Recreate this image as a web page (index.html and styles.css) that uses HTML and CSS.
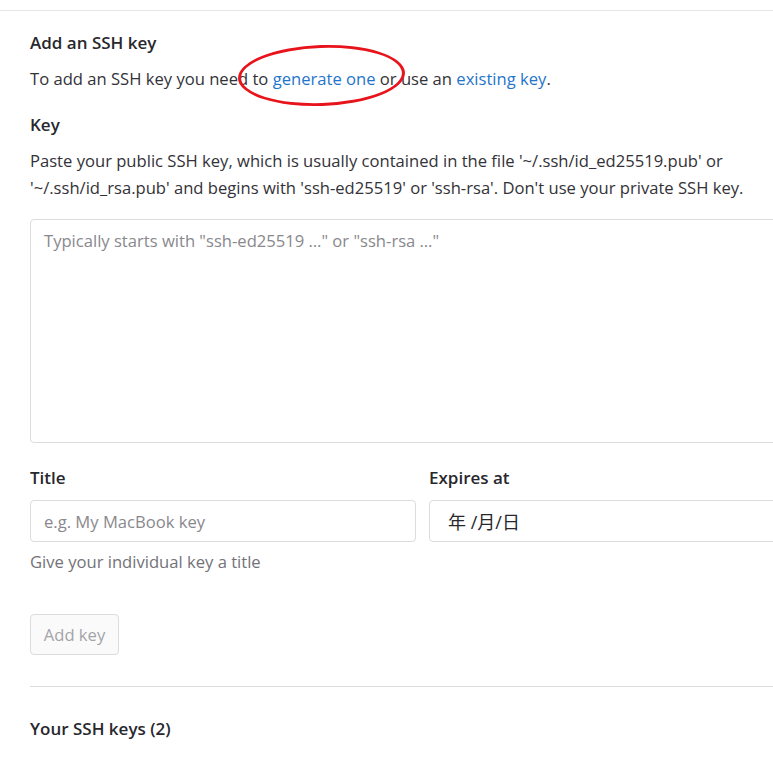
FILE: index.html
```html
<!DOCTYPE html>
<html>
<head>
<meta charset="utf-8">
<link rel="stylesheet" href="styles.css">
</head>
<body>
<div class="page">
  <div class="section">
    <h4 class="heading">Add an SSH key</h4>
    <p class="intro">To add an SSH key you need to <a href="#">generate one</a> or use an <a href="#">existing key</a>.</p>
    <div class="annot"></div>
    <label class="label">Key</label>
    <p class="desc">Paste your public SSH key, which is usually contained in the file '~/.ssh/id_ed25519.pub' or '~/.ssh/id_rsa.pub' and begins with 'ssh-ed25519' or 'ssh-rsa'. Don't use your private SSH key.</p>
    <div class="textarea"><span class="ph">Typically starts with "ssh-ed25519 …" or "ssh-rsa …"</span></div>
    <div class="row">
      <div class="col">
        <label class="label">Title</label>
        <div class="input"><span class="ph">e.g. My MacBook key</span></div>
        <div class="help">Give your individual key a title</div>
      </div>
      <div class="col">
        <label class="label">Expires at</label>
        <div class="input date">年 /月/日</div>
      </div>
    </div>
    <button class="btn">Add key</button>
    <div class="divider"></div>
    <h4 class="heading keys">Your SSH keys (2)</h4>
  </div>
</div>
</body>
</html>
```

FILE: styles.css
```css
html, body {
  margin: 0;
  padding: 0;
  overflow: hidden;
  background: #fff;
}
body {
  font-family: "Open Sans", "Noto Sans CJK SC", sans-serif;
  font-size: 16.6px;
  color: #333238;
}
.page {
  padding-top: 10px;
}
.section {
  border-top: 1px solid #e6e6e6;
  padding: 20px 30px 0 30px;
  width: 785px;
  position: relative;
}
.heading {
  margin: 0;
  font-size: 17px;
  font-weight: 600;
  line-height: 24px;
  color: #28272d;
}
.intro {
  margin: 12px 0 0 0;
  line-height: 24px;
}
.intro a {
  color: #1f75cb;
  text-decoration: none;
}
.annot {
  position: absolute;
  left: 238px;
  top: 34px;
  width: 161px;
  height: 55px;
  border: 3.5px solid #e8141b;
  border-radius: 50%;
  transform: rotate(-2deg);
}
.label {
  display: block;
  font-weight: 600;
  font-size: 17px;
  line-height: 24px;
  margin-top: 22px;
  color: #28272d;
}
.desc {
  margin: 10px 0 0 0;
  line-height: 27px;
}
.textarea {
  margin-top: 18px;
  height: 204px;
  border: 1px solid #dcdcde;
  border-radius: 4px;
  padding: 9px 13px;
  line-height: 24px;
}
.ph {
  color: #89888d;
}
.row {
  display: flex;
  gap: 13px;
}
.row .label {
  margin-top: 23px;
}
.col {
  flex: 1;
}
.input {
  margin-top: 10px;
  height: 40px;
  border: 1px solid #dcdcde;
  border-radius: 4px;
  padding: 0 13px;
  display: flex;
  align-items: center;
}
.input.date {
  padding-left: 18px;
  font-size: 18px;
  color: #28272d;
}
.help {
  margin-top: 8px;
  line-height: 24px;
  color: #737278;
}
.btn {
  display: block;
  margin-top: 40px;
  width: 89px;
  height: 41px;
  background: #fafafa;
  border: 1px solid #dcdcde;
  border-radius: 4px;
  color: #a4a3a8;
  font-family: inherit;
  font-size: 16.6px;
  padding: 0;
}
.divider {
  margin-top: 31px;
  border-top: 1px solid #dcdcde;
}
.keys {
  margin-top: 30px;
}
```
